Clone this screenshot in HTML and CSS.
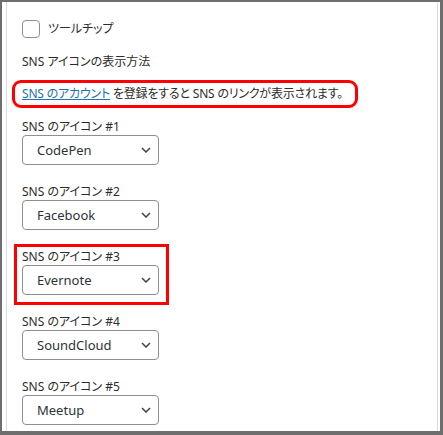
FILE: index.html
```html
<!DOCTYPE html>
<html lang="ja">
<head>
    <meta charset="UTF-8">
    <meta name="viewport" content="width=device-width, initial-scale=1.0">
    <title>SNS アイコン設定</title>
    <link rel="stylesheet" href="styles.css">
</head>
<body>

    <div class="frame">
        <div class="panel">

            <!-- Tooltip toggle -->
            <label class="check-row">
                <span class="checkbox"></span>
                <span>ツールチップ</span>
            </label>

            <p class="heading">SNS アイコンの表示方法</p>

            <p class="notice"><a href="#">SNS のアカウント</a> を登録をすると SNS のリンクが表示されます。</p>

            <!-- Icon selects -->
            <div class="field">
                <div class="field-label">SNS のアイコン #1</div>
                <div class="select">
                    <span>CodePen</span>
                    <svg class="chevron" width="10" height="6" viewBox="0 0 10 6"><path d="M1 1l4 4 4-4" fill="none" stroke="#3c434a" stroke-width="1.5"/></svg>
                </div>
            </div>

            <div class="field">
                <div class="field-label">SNS のアイコン #2</div>
                <div class="select">
                    <span>Facebook</span>
                    <svg class="chevron" width="10" height="6" viewBox="0 0 10 6"><path d="M1 1l4 4 4-4" fill="none" stroke="#3c434a" stroke-width="1.5"/></svg>
                </div>
            </div>

            <div class="field marked">
                <div class="field-label">SNS のアイコン #3</div>
                <div class="select">
                    <span>Evernote</span>
                    <svg class="chevron" width="10" height="6" viewBox="0 0 10 6"><path d="M1 1l4 4 4-4" fill="none" stroke="#3c434a" stroke-width="1.5"/></svg>
                </div>
            </div>

            <div class="field">
                <div class="field-label">SNS のアイコン #4</div>
                <div class="select">
                    <span>SoundCloud</span>
                    <svg class="chevron" width="10" height="6" viewBox="0 0 10 6"><path d="M1 1l4 4 4-4" fill="none" stroke="#3c434a" stroke-width="1.5"/></svg>
                </div>
            </div>

            <div class="field">
                <div class="field-label">SNS のアイコン #5</div>
                <div class="select">
                    <span>Meetup</span>
                    <svg class="chevron" width="10" height="6" viewBox="0 0 10 6"><path d="M1 1l4 4 4-4" fill="none" stroke="#3c434a" stroke-width="1.5"/></svg>
                </div>
            </div>

        </div>
    </div>

</body>
</html>
```

FILE: styles.css
```css
/* Reset some default styles */
*, *::before, *::after {
    margin: 0;
    padding: 0;
    box-sizing: border-box;
}

body {
    font-family: 'Noto Sans', 'Noto Sans CJK JP', sans-serif;
    font-feature-settings: "palt";
    font-size: 12px;
    color: #2c2c2c;
    background-color: #fff;
    overflow: hidden;
}

/* Outer window frame */
.frame {
    height: 435px;
    border-style: solid;
    border-color: #6e6e6e;
    border-width: 2px 3px 4px 2px;
    overflow: hidden;
}

.panel {
    height: 100%;
    margin: 0 2px 0 4px;
    border-left: 1px solid #dcdcde;
    border-right: 1px solid #dcdcde;
    padding: 18px 15px 0 15px;
}

/* Checkbox row */
.check-row {
    display: flex;
    align-items: center;
    gap: 8px;
    height: 18px;
    line-height: 18px;
}

.checkbox {
    width: 18px;
    height: 18px;
    border: 1px solid #8c8f94;
    border-radius: 4px;
    background-color: #fff;
}

.heading {
    margin-top: 15px;
    line-height: 18px;
}

/* Notice line with rounded red mark */
.notice {
    position: relative;
    margin-top: 14px;
    line-height: 18px;
    letter-spacing: -0.2px;
}

.notice::after {
    content: "";
    position: absolute;
    left: -10px;
    top: -5px;
    width: 346px;
    height: 28px;
    border: 3px solid #f00;
    border-radius: 9px;
}

.notice a {
    color: #2271b1;
    text-decoration: underline;
}

/* Select fields */
.field {
    position: relative;
    margin-top: 16px;
}

.field + .field {
    margin-top: 19px;
}

.field-label {
    line-height: 16px;
}

.select {
    width: 137px;
    height: 30px;
    display: flex;
    align-items: center;
    justify-content: space-between;
    padding: 0 7px 0 14px;
    border: 1px solid #8c8f94;
    border-radius: 4px;
    font-size: 13px;
    color: #2c3338;
}

.chevron {
    display: block;
}

/* Red annotation box */
.marked::after {
    content: "";
    position: absolute;
    left: -8px;
    top: -5px;
    width: 155px;
    height: 61px;
    border: 3px solid #f00;
}
```
